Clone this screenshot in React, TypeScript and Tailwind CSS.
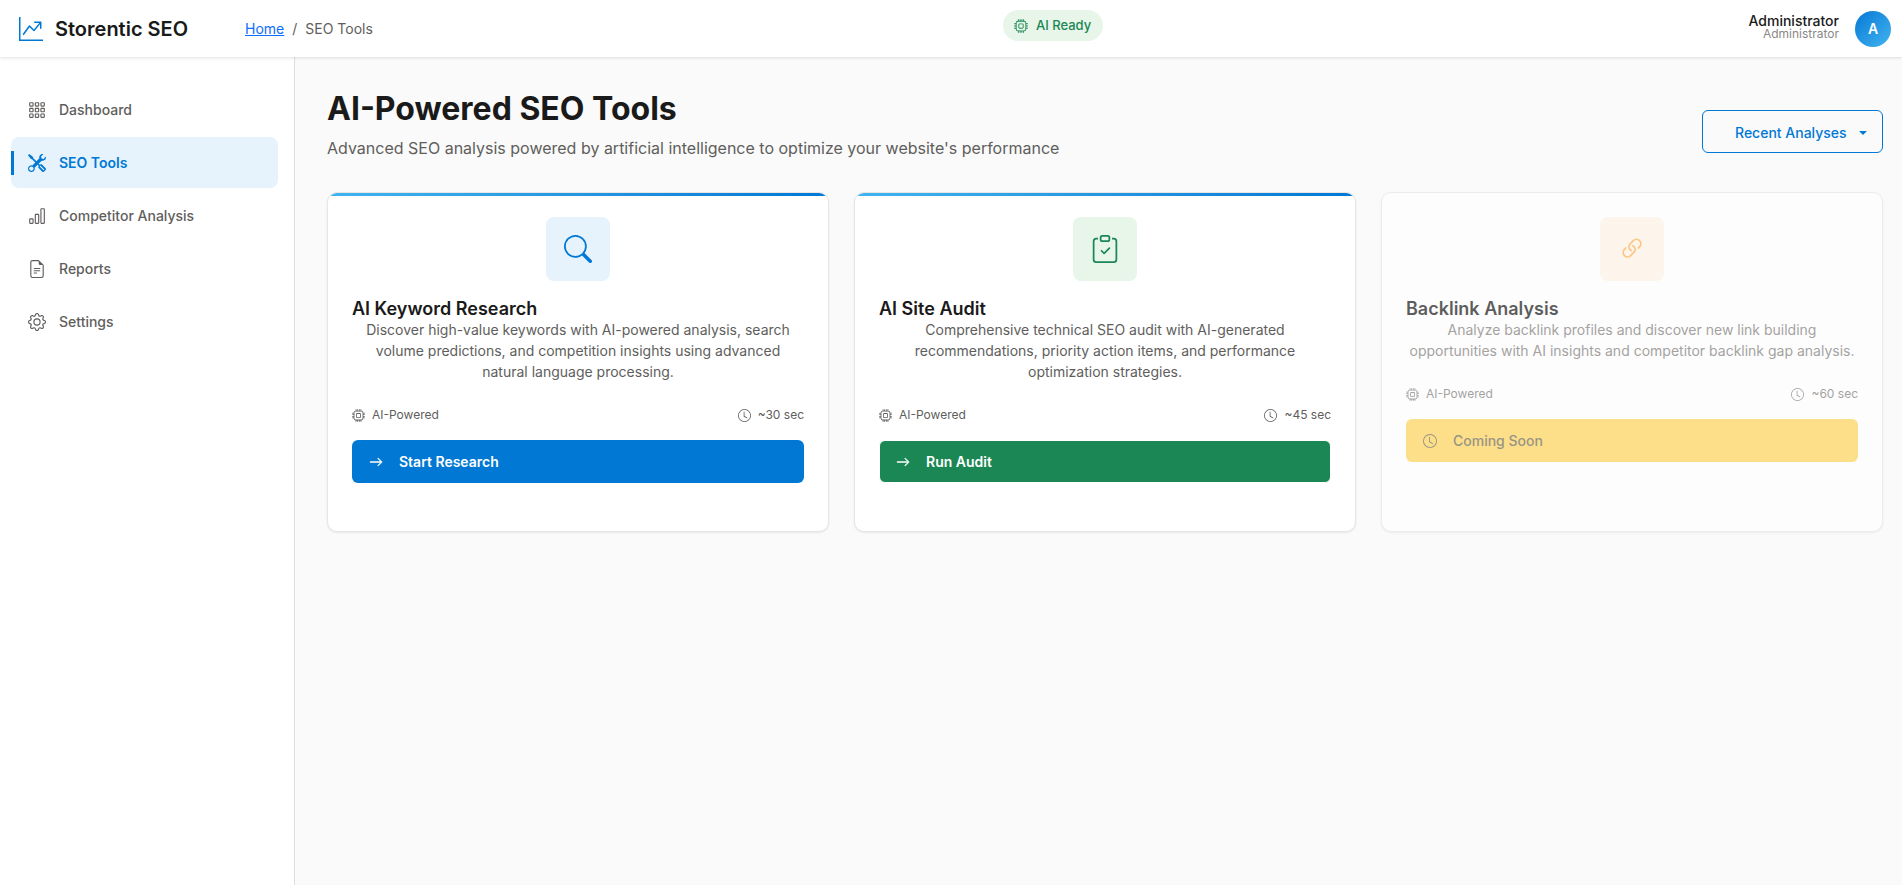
import type { ReactNode } from "react";
import {
  BsArrowRight,
  BsBarChart,
  BsClipboardCheck,
  BsClock,
  BsCpu,
  BsFileEarmarkText,
  BsGear,
  BsGraphUpArrow,
  BsGrid3X3Gap,
  BsLink45Deg,
  BsSearch,
  BsTools,
} from "react-icons/bs";

const navItems = [
  { label: "Dashboard", icon: <BsGrid3X3Gap size={18} /> },
  { label: "SEO Tools", icon: <BsTools size={18} />, active: true },
  { label: "Competitor Analysis", icon: <BsBarChart size={18} /> },
  { label: "Reports", icon: <BsFileEarmarkText size={18} /> },
  { label: "Settings", icon: <BsGear size={18} /> },
];

const Header = () => {
  return (
    <header className="relative z-10 flex h-[57px] items-center justify-between bg-white pl-[19px] pr-[11px] shadow-[0_1px_3px_rgba(0,0,0,0.12)]">
      <div className="flex w-[900px] items-center">
        <BsGraphUpArrow size={24} className="text-[#0078d4]" />
        <span className="ml-3 w-[190px] text-xl font-semibold text-[#1a1a1a]">Storentic SEO</span>
        <nav className="flex items-center text-sm text-[#605e5c]">
          <a href="#" className="text-[#0d6efd] underline">Home</a>
          <span className="px-2">/</span>
          <span>SEO Tools</span>
        </nav>
      </div>
      <div className="absolute left-[1003px] top-[10px] flex h-[31px] w-[100px] items-center gap-2 rounded-full bg-[#e8f5e9] pl-[11px] text-[13px] font-medium text-[#1a8754]">
        <BsCpu size={14} />
        AI Ready
      </div>
      <div className="flex items-center gap-4">
        <div className="pb-1 text-right">
          <div className="text-sm leading-[15px] font-medium text-[#1a1a1a]">Administrator</div>
          <div className="text-xs leading-[12px] text-[#8a8886]">Administrator</div>
        </div>
        <div className="flex h-9 w-9 items-center justify-center rounded-full bg-gradient-to-br from-[#0078d4] to-[#40b4f0] text-sm font-semibold text-white">
          A
        </div>
      </div>
    </header>
  );
};

const Sidebar = () => {
  return (
    <aside className="flex w-[295px] shrink-0 flex-col gap-[2px] border-r border-[#e1dfdd] bg-white pl-[11px] pr-4 pt-[27px]">
      {navItems.map((item) =>
        item.active ? (
          <a key={item.label} href="#" className="relative flex h-[51px] items-center gap-[13px] rounded-lg bg-[#e6f3fc] pl-[17px] text-sm font-semibold text-[#0078d4]">
            <span className="absolute left-0 top-[14px] h-6 w-[3px] bg-[#0078d4]"></span>
            {item.icon}
            {item.label}
          </a>
        ) : (
          <a key={item.label} href="#" className="flex h-[51px] items-center gap-[13px] pl-[17px] text-sm font-medium text-[#605e5c]">
            {item.icon}
            {item.label}
          </a>
        )
      )}
    </aside>
  );
};

type ToolCardProps = {
  title: string;
  description: ReactNode;
  icon: ReactNode;
  iconBox: string;
  time: string;
  accent?: boolean;
  disabled?: boolean;
  button: ReactNode;
};

const ToolCard = ({ title, description, icon, iconBox, time, accent, disabled, button }: ToolCardProps) => {
  const muted = disabled ? "text-[#7f7d7b]" : "text-[#605e5c]";
  return (
    <div className={`relative h-[340px] overflow-hidden rounded-[10px] border border-[#e8e6e4] bg-white px-6 pt-6 shadow-[0_1px_2px_rgba(0,0,0,0.08)] ${disabled ? "opacity-70" : ""}`}>
      {accent && <div className="absolute inset-x-0 top-0 h-[3px] bg-gradient-to-r from-[#40b4f0] to-[#0078d4]"></div>}
      <div className={`mx-auto flex h-16 w-16 items-center justify-center rounded-lg ${iconBox}`}>{icon}</div>
      <h3 className="mt-[17px] text-lg leading-[21px] font-semibold text-[#1a1a1a]">{title}</h3>
      <p className={`text-center text-sm leading-[21px] ${muted}`}>{description}</p>
      <div className={`mt-[25px] flex items-center justify-between text-xs ${muted}`}>
        <span className="flex items-center gap-[7px]">
          <BsCpu size={13} />
          AI-Powered
        </span>
        <span className="flex items-center gap-[7px]">
          <BsClock size={13} />
          {time}
        </span>
      </div>
      <div className="mt-[17px]">{button}</div>
    </div>
  );
};

const App = () => {
  return (
    <div className="flex h-screen flex-col overflow-hidden bg-white font-[Inter,sans-serif]">
      <Header />
      <div className="flex min-h-0 flex-1">
        <Sidebar />
        <main className="min-w-0 flex-1 bg-[#fafafa] pl-8 pr-5 pt-[33px]">
          <div className="mb-8 flex items-end justify-between">
            <div>
              <h1 className="text-[32px] leading-[38px] font-bold text-[#1a1a1a]">AI-Powered SEO Tools</h1>
              <p className="mt-2 text-base leading-6 text-[#605e5c]">
                Advanced SEO analysis powered by artificial intelligence to optimize your website's performance
              </p>
            </div>
            <button className="-mr-px mb-[7px] flex h-[43px] w-[181px] items-center rounded-md border border-[#0078d4] pl-8 pt-[2px] text-sm font-medium text-[#0078d4]">
              Recent Analyses
              <span className="ml-[12px] h-0 w-0 border-x-[4px] border-t-[4px] border-x-transparent border-t-[#0078d4]"></span>
            </button>
          </div>
          <div className="-mr-px grid grid-cols-3 gap-[25px]">
            <ToolCard
              accent
              title="AI Keyword Research"
              description={<>Discover high-value keywords with AI-powered analysis, search<br />volume predictions, and competition insights using advanced<br />natural language processing.</>}
              icon={<BsSearch size={28} className="text-[#0078d4]" />}
              iconBox="bg-[#e6f3fc]"
              time="~30 sec"
              button={
                <button className="flex h-[43px] w-full items-center gap-4 rounded-md bg-[#0078d4] pl-[17px] text-sm font-semibold text-white">
                  <BsArrowRight size={14} stroke="currentColor" strokeWidth={0.6} />
                  Start Research
                </button>
              }
            />
            <ToolCard
              accent
              title="AI Site Audit"
              description={<>Comprehensive technical SEO audit with AI-generated<br />recommendations, priority action items, and performance<br />optimization strategies.</>}
              icon={<BsClipboardCheck size={28} className="text-[#1a8754]" />}
              iconBox="bg-[#e8f5e9]"
              time="~45 sec"
              button={
                <button className="flex h-[43px] w-full items-center gap-4 rounded-md border border-white bg-[#1a8754] pl-4 text-sm font-semibold text-white">
                  <BsArrowRight size={14} stroke="currentColor" strokeWidth={0.6} />
                  Run Audit
                </button>
              }
            />
            <ToolCard
              disabled
              title="Backlink Analysis"
              description={<>Analyze backlink profiles and discover new link building<br />opportunities with AI insights and competitor backlink gap analysis.</>}
              icon={<BsLink45Deg size={28} className="text-[#ffb156]" />}
              iconBox="bg-[#fff3e6]"
              time="~60 sec"
              button={
                <button className="flex h-[43px] w-full items-center gap-4 rounded-md bg-[#ffd35a] pl-[17px] text-sm font-medium text-[#6f6a55]">
                  <BsClock size={14} />
                  Coming Soon
                </button>
              }
            />
          </div>
        </main>
      </div>
    </div>
  );
};

export default App;
